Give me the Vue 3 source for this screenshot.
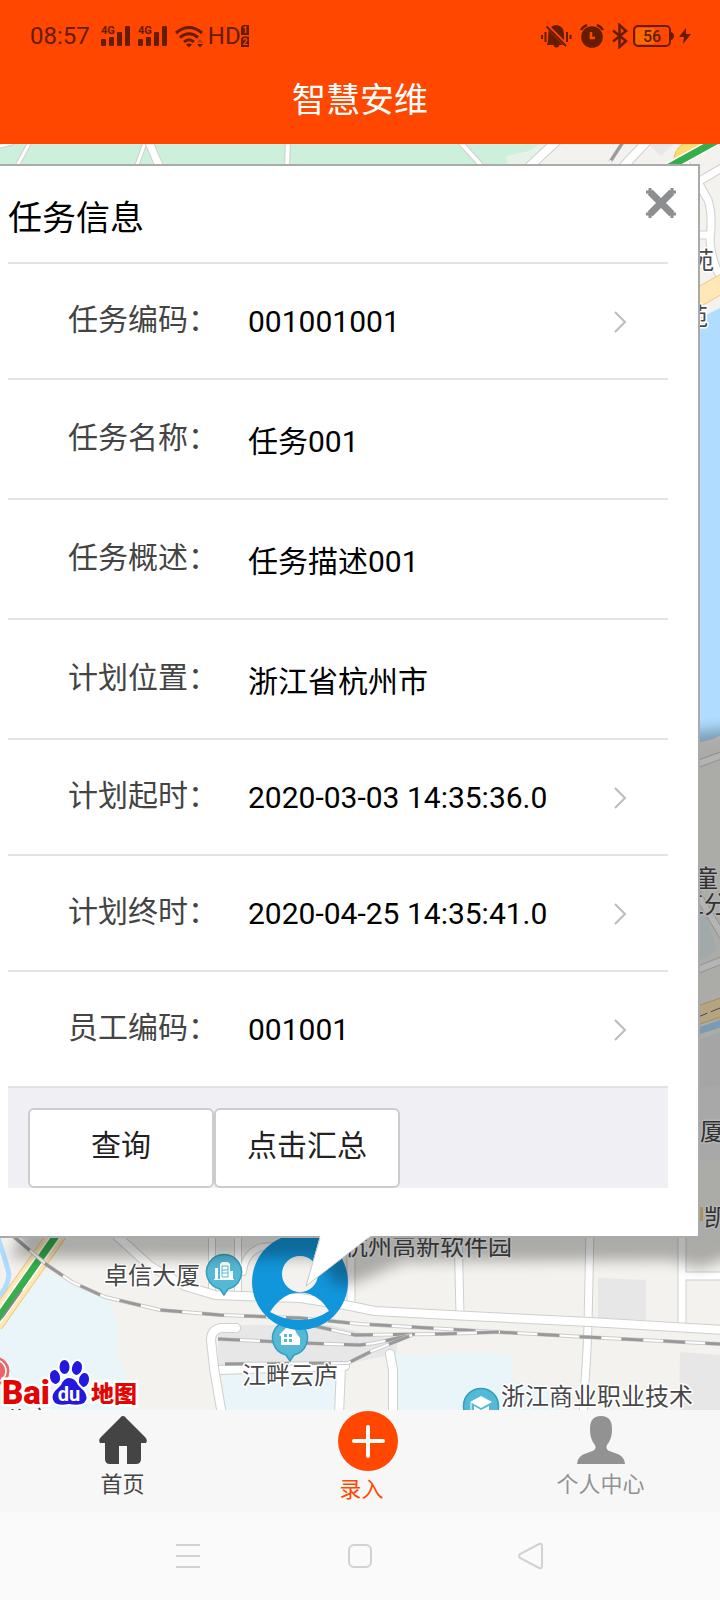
<script setup>
const rows = [
  { label: '任务编码：', value: '001001001', link: true },
  { label: '任务名称：', value: '任务001', link: false },
  { label: '任务概述：', value: '任务描述001', link: false },
  { label: '计划位置：', value: '浙江省杭州市', link: false },
  { label: '计划起时：', value: '2020-03-03 14:35:36.0', link: true },
  { label: '计划终时：', value: '2020-04-25 14:35:41.0', link: true },
  { label: '员工编码：', value: '001001', link: true },
]

const rails = [
  'M13 1236L47 1265L72 1282L105 1297L160 1310L220 1315L300 1318L360 1324L480 1331L585 1337L720 1344',
  'M310 1325L355 1335L440 1334L500 1332',
  'M218 1339L300 1343L360 1345L375 1343L412 1335',
  'M225 1364L348 1363L372 1351L412 1335',
  'M623 142L610 162',
]

const roads = [
  { d: 'M0 146L12 143M30 142L17 166M145 143L137 165', w: 3 },
  { d: 'M148 140L160 168', w: 7 },
  { d: 'M288 140L287 168M460 142L480 164', w: 4 },
  { d: 'M560 138L530 166M650 138L622 168', w: 8 },
  { d: 'M725 166L698 182L708 200Q713 215 710 240Q711 260 722 280M690 235L710 235M680 155L698 182', w: 7 },
  { d: 'M212 1230V1292M238 1230V1296M243 1272Q245 1252 262 1247L275 1246', w: 6 },
  { d: 'M351 1230V1304M458 1230L460 1315M590 1230L588 1325L587 1350L583 1415M682 1230V1326M682 1276H725', w: 7 },
  { d: 'M218 1370L345 1366M341 1366L339 1415', w: 8 },
  { d: 'M117 1236L150 1266L185 1286L215 1295L300 1298L345 1305L375 1311L450 1315L590 1322L725 1330', w: 8 },
  { d: 'M236 1328L221 1328Q211 1330 211 1340L214 1368L222 1415M390 1354L393 1370V1415', w: 8 },
  { d: 'M695 765L725 754M692 885L722 935M690 973L725 959', w: 6 },
]

const places = [
  { text: '苑', x: 690, y: 269 },
  { text: '苑', x: 684, y: 325 },
  { text: '童', x: 694, y: 887 },
  { text: '工分', x: 680, y: 913 },
  { text: '厦', x: 700, y: 1140 },
  { text: '凯', x: 704, y: 1226 },
  { text: '卓信大厦', x: 104, y: 1284 },
  { text: '杭州高新软件园', x: 344, y: 1255 },
  { text: '江畔云庐', x: 242, y: 1384 },
  { text: '浙江商业职业技术', x: 501, y: 1405 },
  { text: '公安', x: 4, y: 1428 },
]
</script>

<template>
  <div class="page">
    <header class="top">
      <div class="status">
        <div class="status-group">
          <span class="time">08:57</span>
          <svg v-for="n in 2" :key="n" class="signal" width="29" height="22" viewBox="0 0 29 22" fill="currentColor">
            <text x="0" y="9" font-size="11" font-weight="700">4G</text>
            <rect x="0" y="14" width="5" height="7" rx="1" />
            <rect x="8" y="12" width="5" height="9" rx="1" />
            <rect x="16" y="7" width="5" height="14" rx="1" />
            <rect x="24" y="1" width="5" height="20" rx="1" />
          </svg>
          <svg class="wifi" width="28" height="23" viewBox="0 0 28 23" fill="none" stroke="currentColor" stroke-width="3">
            <path d="M1 8Q14-3 27 8" />
            <path d="M5 12.500Q14 5 23 12.500" />
            <path d="M9 17Q14 12.500 19 17" />
            <path d="M11 19.500Q14 17.500 17 19.500L14 22.500Z" fill="currentColor" stroke="none" />
            <path d="M22 19H28L25 22.500Z" fill="currentColor" stroke="none" />
            <path d="M22 17.500H28L25 14Z" fill="#a93a12" stroke="none" />
          </svg>
          <span class="hd">HD</span>
          <svg class="sims" width="8" height="22" viewBox="0 0 8 22" fill="currentColor">
            <path d="M2 0H8V10H0V2Z" />
            <path d="M2 11.500H8V22H0V13.500Z" />
            <g fill="#ff4700" font-size="9" font-weight="700" text-anchor="middle">
              <text x="4" y="8">1</text>
              <text x="4" y="20">2</text>
            </g>
          </svg>
        </div>
        <div class="status-group">
          <svg width="31" height="24" viewBox="0 0 31 24" fill="currentColor">
            <path d="M10 3Q12 1 15.500 1Q23 2 23 10V16L10 3ZM7.500 6L22 21H18.500Q17.500 23.500 15.500 23.500Q13 23.500 12.500 21H6L7 17Z" />
            <path d="M5.500 2.500L25 22" stroke="currentColor" stroke-width="2" />
            <path d="M1 11V15M4.500 8V18M26 8V18M29.500 11V15" stroke="currentColor" stroke-width="2" />
          </svg>
          <svg class="alarm" width="24" height="24" viewBox="0 0 24 24">
            <circle cx="12" cy="13" r="10.800" fill="currentColor" />
            <path d="M1 6Q3 2.500 7 1M23 6Q21 2.500 17 1" stroke="currentColor" stroke-width="2.500" fill="none" />
            <path d="M11 8V14H15" stroke="#ff4700" stroke-width="2.500" fill="none" />
          </svg>
          <svg class="bluetooth" width="16" height="26" viewBox="0 0 16 26" fill="none" stroke="currentColor" stroke-width="2.500">
            <path d="M1 7.500L14 18L7.500 24V2L14 8L1 18.500" />
          </svg>
          <svg class="battery" width="41" height="22" viewBox="0 0 41 22">
            <rect x="3" y="3" width="19" height="16" rx="3" fill="#ff6a00" />
            <rect x="1" y="1" width="36" height="20" rx="4" fill="none" stroke="currentColor" stroke-width="2" />
            <path d="M38 7Q41 8 41 11Q41 14 38 15Z" fill="currentColor" />
            <text x="19" y="17" font-size="16" font-weight="500" text-anchor="middle" fill="currentColor">56</text>
          </svg>
          <svg class="bolt" width="12" height="16" viewBox="0 0 12 16" fill="currentColor">
            <path d="M7 0L0 9H5L4 16L12 6H7Z" />
          </svg>
        </div>
      </div>
      <h1>智慧安维</h1>
    </header>

    <main class="map">
      <svg class="map-canvas" viewBox="0 144 720 1266" preserveAspectRatio="xMidYMin slice">
        <defs>
          <filter id="soft" x="-20%" y="-20%" width="140%" height="140%">
            <feGaussianBlur stdDeviation="7" />
          </filter>
        </defs>
        <rect y="144" width="720" height="1266" fill="#f3f2ee" />
        <path d="M0 144H540L530 151L515 154L507 157V170H0Z" fill="#cdf0dd" />
        <path d="M507 170V156L530 152L540 144H548L530 168Z" fill="#e6f1ea" />
        <path d="M648 144H674L661 156Z" fill="#e7e7e9" />
        <path d="M690 321L708 314L722 307V735L713 739L690 745Z" fill="#afdcff" />
        <path d="M690 880L700 895L717 950L690 965Z" fill="#e4f1f2" />
        <path d="M690 1042L722 1032V1085L690 1090Z" fill="#eaeaea" />
        <path d="M690 1090L722 1085V1160H690Z" fill="#eeeeee" />
        <path d="M0 1320L45 1272L108 1298L118 1325L117 1352L130 1385L132 1410H0Z" fill="#e9f5f8" />
        <path d="M218 1325H330L398 1341L396 1354L345 1364L218 1372ZM598 1278L646 1280V1320L598 1318ZM680 1352L720 1355V1410H679ZM20 1236H48L38 1256Z" fill="#e7e7e8" />
        <path d="M222 1372L336 1371V1410H226ZM394 1354L430 1355L450 1352L511 1354L512 1380L570 1398V1410H394Z" fill="#e9f5f8" />
        <path d="M-3 1235Q5 1258 9 1274Q8 1288-2 1297" fill="none" stroke="#afdcff" stroke-width="5" />
        <g v-for="road in roads" :key="road.d" fill="none" stroke-linejoin="round" stroke-linecap="round">
          <path :d="road.d" stroke="#cfcfcd" :stroke-width="road.w + 2" />
          <path :d="road.d" stroke="#ffffff" :stroke-width="road.w" />
        </g>
        <g fill="none">
          <path d="M690 302L725 282M690 1018L725 1006M63 1226L-6 1324" stroke="#f4c67d" stroke-width="19" />
          <path d="M690 302L725 282M690 1018L725 1006M63 1226L-6 1324" stroke="#ffe8b8" stroke-width="17" />
          <path d="M690 1034L725 1022" stroke="#afdcff" stroke-width="7" />
          <path d="M698 1017L725 1006" stroke="#667" stroke-width="1" stroke-dasharray="10 4" />
          <path d="M674 162Q673 151 684 143H712L690 160Z" fill="#ffdc70" stroke="#f2b85c" />
          <path d="M718 140L660 172M63 1226L-6 1324" stroke="#ffffff" stroke-width="10" />
          <path d="M718 140L660 172M63 1226L-6 1324" stroke="#35ae4b" stroke-width="7" />
          <path d="M22 1290L2 1318" stroke="#888888" stroke-width="2" />
          <g v-for="rail in rails" :key="rail">
            <path :d="rail" stroke="#cccccc" stroke-width="4" />
            <path :d="rail" stroke="#ffffff" stroke-width="2" />
            <path :d="rail" stroke="#999999" stroke-width="3" stroke-dasharray="22 20" />
          </g>
        </g>
        <rect x="696" y="1207" width="7" height="14" fill="#f5cf8a" />

        <g class="places">
          <text v-for="p in places" :key="p.text + p.y" :x="p.x" :y="p.y">{{ p.text }}</text>
        </g>

        <g fill="#55b9d5" stroke="#309fbe" stroke-width="1.500">
          <path d="M224 1295L220 1289A17.500 17.500 0 1 1 228 1289Z" />
          <path d="M290 1361L286 1355A17.500 17.500 0 1 1 294 1355Z" />
          <circle cx="481" cy="1406" r="17.500" />
        </g>
        <g fill="#ffffff">
          <path d="M214 1280V1279H215V1268H218V1279H220V1264L222 1262H228L230 1264V1271H233V1279H234V1280Z" />
          <path d="M279 1335L286 1328H294L297 1334L300 1338V1345H281V1336Z" />
          <path d="M481 1396L492 1402L481 1408L470 1402ZM474 1406L481 1410L489 1406V1412H474Z" />
          <path d="M471 1403V1412" stroke="#ffffff" />
        </g>
        <path d="M222 1266H228V1277H222ZM222 1270H228M222 1273H228" fill="none" stroke="#55b9d5" />
        <path d="M284 1334H287V1337H284ZM289 1334H292V1337H289ZM284 1339H287V1342H284ZM289 1339H292V1342H289Z" fill="#55b9d5" />

        <path
          fill="#1296db"
          fill-rule="evenodd"
          d="M252 1282A48 48 0 1 1 348 1282A48 48 0 1 1 252 1282ZM282 1274A18 18 0 1 0 318 1274A18 18 0 1 0 282 1274ZM270 1312Q278 1299 290 1294Q300 1291 310 1294Q322 1299 329 1311Q316 1320 300 1320Q284 1320 270 1312Z"
        />

        <path
          d="M740 728L600 740V1220L26 1225L10 1258H320L336 1286L352 1284L404 1262L670 1260L700 1268L740 1254Z"
          filter="url(#soft)"
          opacity="0.29"
        />

        <g class="brand">
          <circle cx="-5" cy="1371" r="14" fill="#e9676b" stroke="#e9676b" stroke-width="1" />
          <circle cx="-5" cy="1371" r="11" fill="none" stroke="#ffffff" stroke-width="1.500" />
          <g class="brand-red">
            <text x="2" y="1404" font-size="33">Bai</text>
            <text x="91" y="1402" font-size="23" class="brand-cjk">地图</text>
          </g>
          <g fill="#2319dc" stroke="#ffffff" stroke-width="4" paint-order="stroke">
            <ellipse cx="64.500" cy="1367" rx="5" ry="7" />
            <ellipse cx="77" cy="1368" rx="5" ry="7" transform="rotate(12 77 1368)" />
            <ellipse cx="55" cy="1377" rx="5" ry="7" transform="rotate(-12 55 1377)" />
            <ellipse cx="84" cy="1380" rx="5" ry="7" transform="rotate(10 84 1380)" />
            <path d="M69 1378Q75 1378 78 1385L84 1391Q89 1398 84 1403Q79 1406 69 1404Q59 1406 55 1403Q50 1397 55 1391L61 1385Q64 1378 69 1378Z" />
          </g>
          <text x="69" y="1401" class="brand-du">du</text>
        </g>
      </svg>

      <section class="card">
        <h2>任务信息</h2>
        <button class="close" type="button" aria-label="关闭">
          <svg width="30" height="30" viewBox="0 0 30 30" stroke="#8c8e90" fill="none">
            <path d="M4 4L26 26M26 4L4 26" stroke-width="7" />
            <path d="M0 4H4V0M26 0V4H30M0 26H4V30M26 30V26H30" stroke-width="3" />
          </svg>
        </button>
        <ul class="rows">
          <li v-for="row in rows" :key="row.label">
            <component :is="row.link ? 'button' : 'div'" class="row" :class="{ tall: !row.link }">
              <span class="label">{{ row.label }}</span>
              <span class="value">{{ row.value }}</span>
              <svg v-if="row.link" class="chevron" width="13" height="22" viewBox="0 0 13 22" fill="none" stroke="#bbbbbb" stroke-width="2">
                <path d="M1 1L11 11L1 21" />
              </svg>
            </component>
          </li>
        </ul>
        <div class="actions">
          <button type="button">查询</button>
          <button type="button">点击汇总</button>
        </div>
        <svg class="tail" width="66" height="51" viewBox="0 0 66 51">
          <path d="M15 0H66L1 50Z" fill="#ffffff" />
          <path d="M15 2L1 50L63 2" fill="none" stroke="#c8c8c8" stroke-width="1" />
        </svg>
      </section>
    </main>

    <nav class="tabs">
      <a href="#home" class="tab home">
        <svg width="48" height="48" viewBox="0 0 48 48" fill="currentColor">
          <path d="M24 0Q26 0 27 2L46 21Q49 24 47 27H42V43Q42 48 37 48H28V30H20V48H11Q6 48 6 43V27H1Q-1 24 2 21L21 2Q22 0 24 0Z" />
        </svg>
        <span>首页</span>
      </a>
      <a href="#add" class="tab add">
        <svg width="72" height="60" viewBox="0 0 72 60">
          <circle cx="42" cy="30" r="30" fill="currentColor" />
          <path d="M42 16V45M28 30H57" stroke="#ffffff" stroke-width="4" stroke-linecap="round" />
        </svg>
        <span>录入</span>
      </a>
      <a href="#me" class="tab me">
        <svg width="48" height="48" viewBox="0 0 48 48" fill="currentColor">
          <path d="M24 0C32 0 35 5 35 13C35 21 33 25 30 29C28 34 32 35 38 37Q48 40 48 48H0Q0 40 10 37C16 35 20 34 18 29C15 25 13 21 13 13C13 5 16 0 24 0Z" />
        </svg>
        <span>个人中心</span>
      </a>
    </nav>

    <div class="system">
      <button type="button" aria-label="最近任务">
        <svg width="28" height="28" viewBox="0 0 28 28"><path d="M2 3H26M2 14H26M2 25H26" /></svg>
      </button>
      <button type="button" aria-label="主屏幕">
        <svg width="28" height="28" viewBox="0 0 28 28"><rect x="3" y="3" width="22" height="22" rx="5" /></svg>
      </button>
      <button type="button" aria-label="返回">
        <svg width="28" height="28" viewBox="0 0 28 28"><path d="M21 2Q24 1 24 4V24Q24 27 21 26L2 16Q0 14 2 12Z" /></svg>
      </button>
    </div>
  </div>
</template>

<style>
body {
  margin: 0;
}
</style>

<style scoped>
.page {
  display: flex;
  flex-direction: column;
  min-height: 100vh;
  background: #fafafa;
  font-family: Roboto, "Noto Sans CJK SC", sans-serif;
  color: #000;
}

button {
  font: inherit;
  color: inherit;
  border: 0;
  padding: 0;
  background: none;
}

svg {
  display: block;
  flex: none;
}

.top {
  background: #ff4700;
  color: #fff;
}

.status {
  display: flex;
  justify-content: space-between;
  height: 72px;
  padding: 0 29px 0 30px;
  color: #661c00;
}

.status-group {
  display: flex;
  align-items: center;
}

.time,
.hd {
  font-size: 24px;
  line-height: 28px;
}

.time {
  margin-right: 3px;
}

.signal {
  margin-right: 8px;
  margin-left: 0;
}

.time + .signal {
  margin-left: 8px;
}

.hd {
  margin-left: 5px;
}

.alarm {
  margin-left: 8px;
}

.bluetooth {
  margin-left: 8px;
}

.battery {
  margin-left: 5px;
}

.bolt {
  margin-left: 5px;
}

h1 {
  margin: 0;
  height: 72px;
  font-size: 34px;
  font-weight: 400;
  line-height: 56px;
  text-align: center;
}

.map {
  position: relative;
  flex: 1;
  overflow: hidden;
}

.map-canvas {
  position: absolute;
  inset: 0;
  width: 100%;
  height: 100%;
}

.places {
  font-size: 24px;
  fill: #484848;
  stroke: #fff;
  stroke-width: 3px;
  stroke-linejoin: round;
  paint-order: stroke;
}

.brand text {
  font-weight: 900;
}

.brand-red {
  fill: #e10602;
  stroke: #fff;
  stroke-width: 5px;
  paint-order: stroke;
}

.brand .brand-du {
  font-size: 20px;
  font-weight: 700;
  fill: #fff;
  text-anchor: middle;
}

.card {
  position: relative;
  margin: 20px 20px 0 0;
  padding: 0 30px 48px 8px;
  background: #fff;
  border: 2px solid #aaa;
  border-left: 0;
}

h2 {
  margin: 0;
  padding-top: 8px;
  font-size: 34px;
  font-weight: 400;
  line-height: 88px;
}

.close {
  position: absolute;
  top: 22px;
  right: 22px;
}

.rows {
  margin: 0;
  padding: 0;
  list-style: none;
}

.row {
  display: flex;
  align-items: center;
  box-sizing: border-box;
  width: 100%;
  height: 116px;
  padding: 2px 41px 0 60px;
  border-top: 2px solid #e3e3e3;
  font-size: 30px;
  line-height: 44px;
  text-align: left;
}

.tall {
  height: 120px;
}

.label {
  width: 180px;
  padding-bottom: 4px;
  color: #444;
}

.value {
  flex: 1;
}

.tall .value {
  padding-top: 4px;
}

.actions {
  display: flex;
  padding: 20px 20px 0;
  background: #efeff4;
  border-top: 2px solid #e1e1e6;
}

.actions button {
  box-sizing: border-box;
  width: 186px;
  height: 80px;
  padding-bottom: 10px;
  background: #fff;
  border: 2px solid #ccc;
  border-radius: 6px;
  font-size: 30px;
  color: #222;
}

.tail {
  position: absolute;
  left: 305px;
  top: 100%;
}

.tabs {
  display: grid;
  grid-template-columns: repeat(3, 1fr);
  height: 102px;
  padding-left: 3px;
  background: #f7f7f7;
}

.tab {
  display: flex;
  flex-direction: column;
  align-items: center;
  gap: 5px;
  padding-top: 6px;
  font-size: 22px;
  line-height: 32px;
  text-decoration: none;
}

.home {
  color: #444;
}

.add {
  padding-top: 1px;
  gap: 3px;
  color: #ff4700;
}

.me {
  color: #929292;
}

.system {
  display: grid;
  grid-template-columns: repeat(3, 1fr);
  place-items: center;
  height: 88px;
  padding: 0 102px;
}

.system svg {
  fill: none;
  stroke: #d2d2d2;
  stroke-width: 2px;
}
</style>
